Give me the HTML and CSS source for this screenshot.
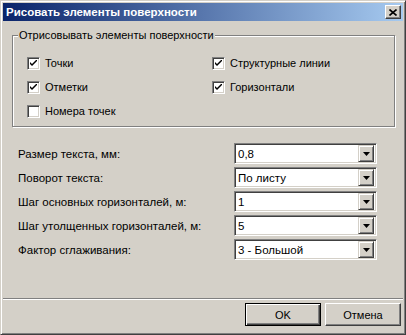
FILE: index.html
```html
<!DOCTYPE html>
<html lang="ru">
<head>
    <meta charset="UTF-8">
    <title>Рисовать элементы поверхности</title>
    <link rel="stylesheet" href="styles.css">
</head>
<body>
    <div class="window">
        <div class="titlebar">
            <span class="title">Рисовать элементы поверхности</span>
            <span class="close-btn">
                <svg width="8" height="7" viewBox="0 0 8 7"><path d="M0.5 0.5 L7.5 6.5 M7.5 0.5 L0.5 6.5" stroke="#000" stroke-width="1.6"/></svg>
            </span>
        </div>

        <div class="group">
            <span class="group-label">Отрисовывать элементы поверхности</span>
            <div class="checks">
                <div class="check"><span class="box"><svg width="7" height="7" viewBox="0 0 7 7"><path d="M0 2 L0 4 L2 6 L7 1 L7 -1 L2 4 Z" fill="#000"/></svg></span>Точки</div>
                <div class="check"><span class="box"><svg width="7" height="7" viewBox="0 0 7 7"><path d="M0 2 L0 4 L2 6 L7 1 L7 -1 L2 4 Z" fill="#000"/></svg></span>Структурные линии</div>
                <div class="check"><span class="box"><svg width="7" height="7" viewBox="0 0 7 7"><path d="M0 2 L0 4 L2 6 L7 1 L7 -1 L2 4 Z" fill="#000"/></svg></span>Отметки</div>
                <div class="check"><span class="box"><svg width="7" height="7" viewBox="0 0 7 7"><path d="M0 2 L0 4 L2 6 L7 1 L7 -1 L2 4 Z" fill="#000"/></svg></span>Горизонтали</div>
                <div class="check"><span class="box"></span>Номера точек</div>
            </div>
        </div>

        <div class="fields">
            <span class="field-label">Размер текста, мм:</span>
            <div class="combo"><span class="combo-value">0,8</span><span class="combo-btn"><svg width="7" height="4" viewBox="0 0 7 4"><path d="M0 0 H7 L3.5 4 Z" fill="#000"/></svg></span></div>

            <span class="field-label">Поворот текста:</span>
            <div class="combo"><span class="combo-value">По листу</span><span class="combo-btn"><svg width="7" height="4" viewBox="0 0 7 4"><path d="M0 0 H7 L3.5 4 Z" fill="#000"/></svg></span></div>

            <span class="field-label">Шаг основных горизонталей, м:</span>
            <div class="combo"><span class="combo-value">1</span><span class="combo-btn"><svg width="7" height="4" viewBox="0 0 7 4"><path d="M0 0 H7 L3.5 4 Z" fill="#000"/></svg></span></div>

            <span class="field-label">Шаг утолщенных горизонталей, м:</span>
            <div class="combo"><span class="combo-value">5</span><span class="combo-btn"><svg width="7" height="4" viewBox="0 0 7 4"><path d="M0 0 H7 L3.5 4 Z" fill="#000"/></svg></span></div>

            <span class="field-label">Фактор сглаживания:</span>
            <div class="combo"><span class="combo-value">3 - Большой</span><span class="combo-btn"><svg width="7" height="4" viewBox="0 0 7 4"><path d="M0 0 H7 L3.5 4 Z" fill="#000"/></svg></span></div>
        </div>

        <div class="separator"></div>

        <div class="buttons">
            <span class="btn default">OK</span>
            <span class="btn">Отмена</span>
        </div>
    </div>
</body>
</html>
```

FILE: styles.css
```css
body {
    margin: 0;
    font-family: 'Liberation Sans', Arial, sans-serif;
    font-size: 11px;
    color: #000;
    background-color: #d4d0c8;
}

.window {
    width: 406px;
    height: 335px;
    box-sizing: border-box;
    border: 1px solid;
    border-color: #d4d0c8 #404040 #404040 #d4d0c8;
    box-shadow: inset 1px 1px 0 #fff, inset -1px -1px 0 #808080;
    padding: 2px;
    background-color: #d4d0c8;
    display: flex;
    flex-direction: column;
}

/* title bar */
.titlebar {
    height: 18px;
    display: flex;
    align-items: center;
    justify-content: space-between;
    padding: 0 2px 0 2px;
    background: linear-gradient(to right, #0a246a, #a6caf0);
}

.title {
    color: #fff;
    font-weight: bold;
    font-size: 11.5px;
    padding-left: 1px;
}

.close-btn {
    width: 16px;
    height: 14px;
    box-sizing: border-box;
    background-color: #d4d0c8;
    border: 1px solid;
    border-color: #fff #404040 #404040 #fff;
    box-shadow: inset -1px -1px 0 #808080;
    display: flex;
    align-items: center;
    justify-content: center;
}

/* group box */
.group {
    position: relative;
    margin: 14px 0 0 9px;
    width: 383px;
    height: 92px;
    box-sizing: border-box;
    border: 1px solid #808080;
    box-shadow: 1px 1px 0 #fff, inset 1px 1px 0 #fff;
    padding: 15px 0 0 14px;
}

.group-label {
    position: absolute;
    left: 5px;
    top: -8px;
    padding: 0 1px;
    background-color: #d4d0c8;
    line-height: 14px;
}

.checks {
    display: grid;
    grid-template-columns: 185px 1fr;
    grid-auto-rows: 24px;
}

.check {
    display: flex;
    align-items: center;
    gap: 5px;
}

.box {
    width: 13px;
    height: 13px;
    box-sizing: border-box;
    border: 1px solid;
    border-color: #808080 #fff #fff #808080;
    box-shadow: inset 1px 1px 0 #404040, inset -1px -1px 0 #d4d0c8;
    background-color: #fff;
    display: flex;
    align-items: center;
    justify-content: center;
}

/* fields */
.fields {
    display: grid;
    grid-template-columns: 216px 143px;
    grid-auto-rows: 21px;
    row-gap: 3px;
    margin: 16px 0 0 15px;
    align-items: center;
}

.field-label {
    font-size: 11.5px;
}

.combo {
    height: 21px;
    box-sizing: border-box;
    border: 1px solid;
    border-color: #808080 #fff #fff #808080;
    box-shadow: inset 1px 1px 0 #404040, inset -1px -1px 0 #d4d0c8;
    background-color: #fff;
    display: flex;
    align-items: center;
    justify-content: space-between;
    padding: 2px;
}

.combo-value {
    padding-left: 1px;
    font-size: 11.5px;
}

.combo-btn {
    width: 16px;
    height: 17px;
    box-sizing: border-box;
    background-color: #d4d0c8;
    border: 1px solid;
    border-color: #d4d0c8 #404040 #404040 #d4d0c8;
    box-shadow: inset 1px 1px 0 #fff, inset -1px -1px 0 #808080;
    display: flex;
    align-items: center;
    justify-content: center;
}

/* bottom */
.separator {
    margin-top: auto;
    border-top: 1px solid #808080;
    border-bottom: 1px solid #fff;
    height: 0;
    margin-bottom: 3px;
}

.buttons {
    display: flex;
    justify-content: flex-end;
    gap: 4px;
    padding-right: 2px;
    margin-bottom: 6px;
}

.btn {
    width: 76px;
    height: 23px;
    box-sizing: border-box;
    border: 1px solid;
    border-color: #fff #404040 #404040 #fff;
    box-shadow: inset -1px -1px 0 #808080;
    display: flex;
    align-items: center;
    justify-content: center;
}

.btn.default {
    border: 1px solid #000;
    box-shadow: inset 1px 1px 0 #fff, inset -1px -1px 0 #404040, inset -2px -2px 0 #808080;
}
```
